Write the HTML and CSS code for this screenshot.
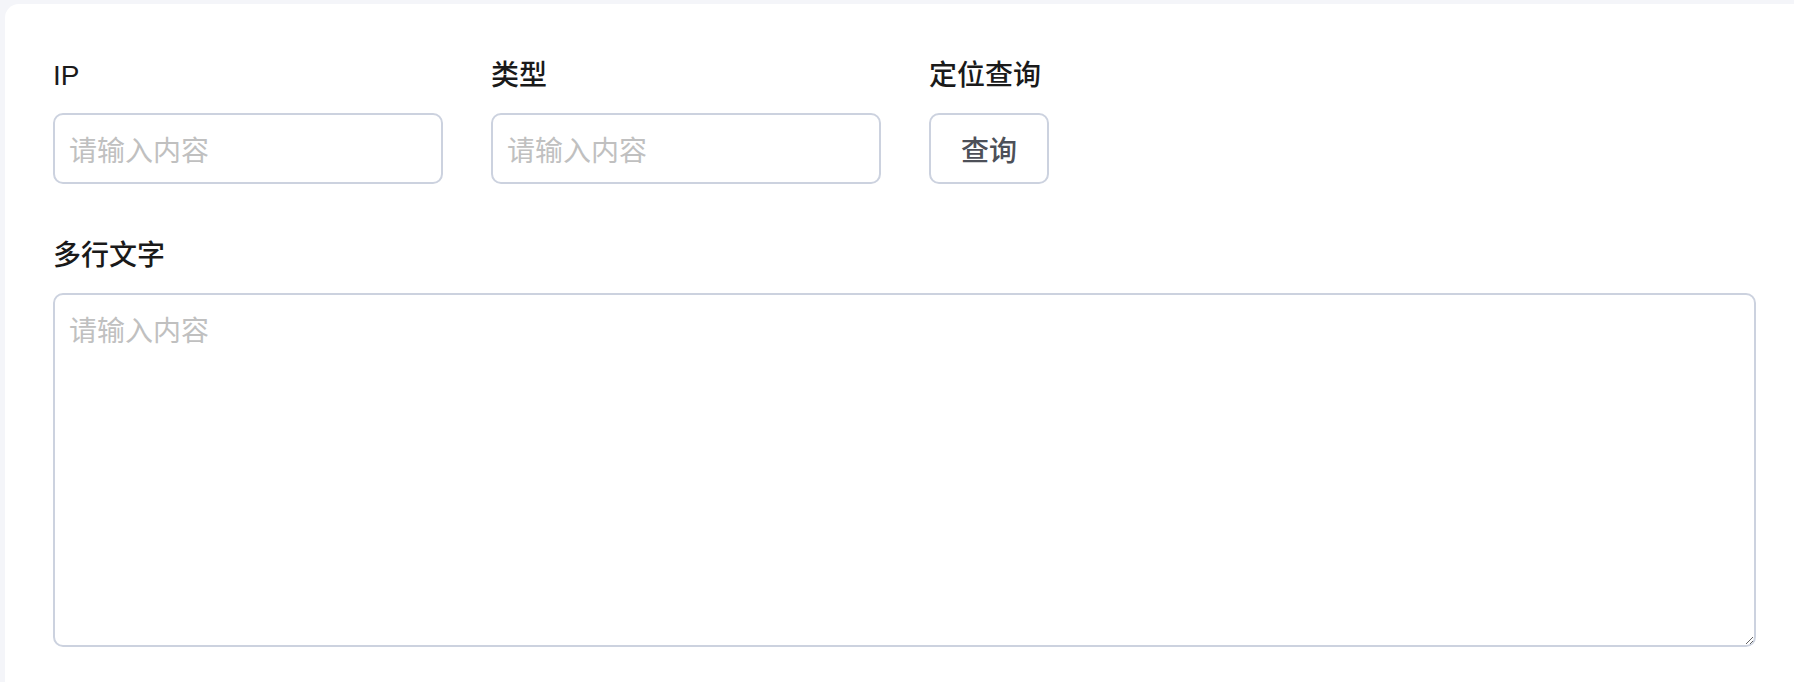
FILE: index.html
```html
<!DOCTYPE html>
<html lang="zh-CN">
<head>
    <meta charset="UTF-8">
    <meta name="viewport" content="width=device-width, initial-scale=1.0">
    <title>IP 定位查询</title>
    <link rel="stylesheet" href="styles.css">
</head>
<body>
    <div class="card">
        <div class="form-row">
            <div class="form-item">
                <label class="form-label" for="ip">IP</label>
                <input class="form-input" id="ip" type="text" placeholder="请输入内容">
            </div>
            <div class="form-item">
                <label class="form-label" for="type">类型</label>
                <input class="form-input" id="type" type="text" placeholder="请输入内容">
            </div>
            <div class="form-item">
                <label class="form-label">定位查询</label>
                <button class="btn" type="button">查询</button>
            </div>
        </div>

        <div class="form-item form-item-wide">
            <label class="form-label" for="text">多行文字</label>
            <textarea class="form-textarea" id="text" placeholder="请输入内容"></textarea>
        </div>
    </div>
</body>
</html>
```

FILE: styles.css
```css
* {
    margin: 0;
    padding: 0;
    box-sizing: border-box;
    font-family: "Helvetica Neue", "Liberation Sans", "Noto Sans CJK SC", sans-serif;
}

body {
    background: #f4f5f9;
    padding: 4px 0 0 5px;
    height: 100vh;
    overflow: hidden;
}

.card {
    background: #fff;
    border-radius: 14px 0 0 0;
    padding: 51px 38px 40px 48px;
    min-height: 100%;
}

.form-row {
    display: grid;
    grid-template-columns: 390px 390px auto;
    column-gap: 48px;
    justify-content: start;
}

.form-item {
    display: flex;
    flex-direction: column;
    align-items: flex-start;
}

.form-item-wide {
    margin-top: 51px;
}

.form-label {
    font-size: 28px;
    line-height: 42px;
    font-weight: 500;
    color: #1a1a1a;
    margin-bottom: 16px;
}

.form-input,
.form-textarea {
    width: 100%;
    border: 2px solid #ccd2df;
    border-radius: 10px;
    background: #fff;
    color: #333;
    font-size: 28px;
    font-family: "Noto Sans CJK SC", sans-serif;
    outline: none;
}

.form-input {
    height: 71px;
    padding: 0 14px;
}

.form-textarea {
    height: 354px;
    padding: 13px 14px;
    line-height: 42px;
    resize: both;
}

.form-input::placeholder,
.form-textarea::placeholder {
    color: #c0c0c0;
}

.btn {
    height: 71px;
    padding: 0 30px;
    background: #fff;
    border: 2px solid #ccd2df;
    border-radius: 10px;
    color: #4d5058;
    font-size: 28px;
    font-weight: 500;
    font-family: "Noto Sans CJK SC", sans-serif;
    cursor: pointer;
}
```
